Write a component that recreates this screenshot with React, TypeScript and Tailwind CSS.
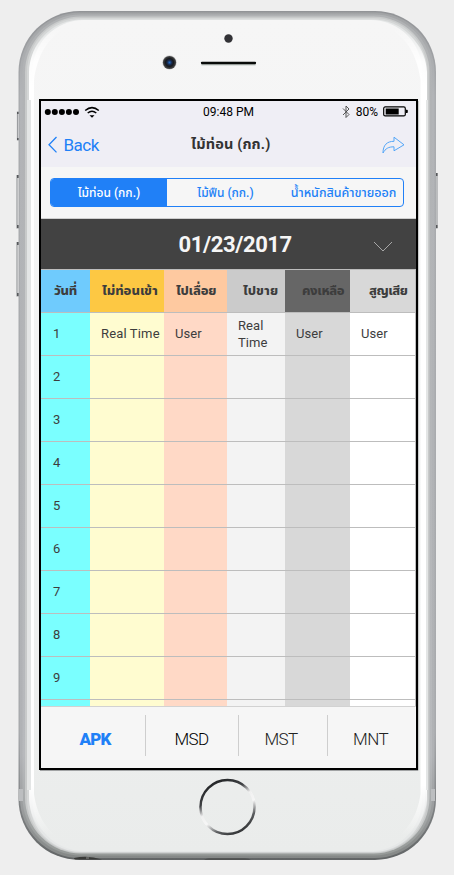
import React from "react";

const columns = [
  { title: "วันที่", text: "", width: "w-[49px]", head: "bg-[#6fcbfd]", body: "bg-[#7affff]", pad: "pl-[13px]", track: "tracking-[-0.2px]" },
  { title: "ไม่ท่อนเข้า", text: "Real Time", width: "w-[74px]", head: "bg-[#fdc843]", body: "bg-[#fffcd0]", pad: "pl-[12px]", track: "tracking-normal" },
  { title: "ไปเลื่อย", text: "User", width: "w-[63px]", head: "bg-[#fec9a0]", body: "bg-[#ffd9c6]", pad: "pl-[12px]", track: "tracking-[-0.15px]" },
  { title: "ไปขาย", text: "Real Time", width: "w-[58px]", head: "bg-[#cbcbcb]", body: "bg-[#f3f3f3]", pad: "pl-[16px]", track: "tracking-[0.1px]" },
  { title: "คงเหลือ", text: "User", width: "w-[65px]", head: "bg-[#666666]", body: "bg-[#d8d8d8]", pad: "pl-[17px]", track: "tracking-[-0.4px]" },
  { title: "สูญเสีย", text: "User", width: "w-[65px]", head: "bg-[#d8d8d8]", body: "bg-white", pad: "pl-[19px]", track: "tracking-[-0.5px]" },
];

const bodyPads = ["pl-[12px]", "pl-[11px]", "pl-[11px]", "pl-[11px]", "pl-[11px]", "pl-[11px]"];

function PhoneCase() {
  return (
    <svg className="absolute inset-0" width="454" height="875" viewBox="0 0 454 875" fill="none">
      <defs>
        <linearGradient id="edge" x1="0" y1="11" x2="0" y2="860" gradientUnits="userSpaceOnUse">
          <stop offset="0" stopColor="#929497" />
          <stop offset="0.1" stopColor="#aaacaf" />
          <stop offset="0.85" stopColor="#a8aaad" />
          <stop offset="1" stopColor="#626566" />
        </linearGradient>
        <linearGradient id="metal" x1="0" y1="12" x2="0" y2="858" gradientUnits="userSpaceOnUse">
          <stop offset="0" stopColor="#a2a4a6" />
          <stop offset="0.1" stopColor="#b2b4b7" />
          <stop offset="0.88" stopColor="#b0b2b5" />
          <stop offset="1" stopColor="#858887" />
        </linearGradient>
        <linearGradient id="inner" x1="0" y1="14" x2="0" y2="856" gradientUnits="userSpaceOnUse">
          <stop offset="0" stopColor="#b0b2b4" />
          <stop offset="0.88" stopColor="#b7b9bc" />
          <stop offset="1" stopColor="#969a98" />
        </linearGradient>
        <linearGradient id="face" x1="0" y1="20" x2="0" y2="852" gradientUnits="userSpaceOnUse">
          <stop offset="0" stopColor="#f6f6f6" />
          <stop offset="0.4" stopColor="#f3f4f4" />
          <stop offset="1" stopColor="#eaeceb" />
        </linearGradient>
        <linearGradient id="shine" x1="0" y1="20" x2="0" y2="852" gradientUnits="userSpaceOnUse">
          <stop offset="0.01" stopColor="#fff" stopOpacity="0" />
          <stop offset="0.05" stopColor="#fff" stopOpacity="0.9" />
          <stop offset="0.08" stopColor="#fff" />
          <stop offset="0.92" stopColor="#fff" />
          <stop offset="0.98" stopColor="#fff" stopOpacity="0" />
        </linearGradient>
        <linearGradient id="ring" x1="215" y1="782" x2="242" y2="834" gradientUnits="userSpaceOnUse">
          <stop offset="0" stopColor="#252729" />
          <stop offset="0.25" stopColor="#3f4144" />
          <stop offset="0.42" stopColor="#f0f0f0" />
          <stop offset="0.58" stopColor="#f6f6f6" />
          <stop offset="0.78" stopColor="#5c5e60" />
          <stop offset="1" stopColor="#292b2d" />
        </linearGradient>
        <radialGradient id="lens">
          <stop offset="0" stopColor="#246cc6" />
          <stop offset="0.35" stopColor="#18294a" />
          <stop offset="0.6" stopColor="#17191b" />
          <stop offset="1" stopColor="#4b4c4e" />
        </radialGradient>
      </defs>
      <path d="M19 112h-1.500v28H19M19 175.500h-2V228H19M19 242.500h-2V296H19M435 173.500h2V228H435" stroke="#9b9da0" strokeWidth="1.200" />
      <path d="M17 112h2v2h-2zM17 138h2v2h-2zM17 175h2.500v3H17zM17 225h2.500v3H17zM17 242h2.500v3H17zM17 293h2.500v3H17zM435.500 173h2v3h-2zM435.500 225h2v3h-2z" fill="#56585b" />
      <rect x="18.500" y="11" width="417.500" height="849" rx="61" fill="url(#edge)" />
      <rect x="20" y="12.500" width="414.500" height="845.500" rx="60" fill="url(#metal)" />
      <rect x="22.500" y="14.500" width="409.500" height="841" rx="58" fill="url(#inner)" />
      <rect x="25" y="16.500" width="404.500" height="837" rx="56" fill="#c8caca" />
      <rect x="27" y="18" width="400.500" height="834.500" rx="54" fill="#d5d7d7" />
      <rect x="29.500" y="19.500" width="395.500" height="832.500" rx="52" fill="#e5e7e7" />
      <rect x="32.500" y="20" width="389.500" height="831" rx="51" fill="url(#face)" />
      <path d="M72 25C44 28 30 48 29 72V800C31 824 46 840 68 844C47 833 37 816 34 794V80C38 50 52 33 72 25Z" fill="url(#shine)" />
      <path d="M382.500 25C410.500 28 426 48 427 72V800C425 824 408.500 840 386.500 844C407.500 833 417.500 816 420.500 794V80C416.500 50 402.500 33 382.500 25Z" fill="url(#shine)" />
      <path d="M29 100V790" stroke="#e3e5e5" strokeWidth="4" />
      <path d="M427 100V790" stroke="#e3e5e5" strokeWidth="2" />
      <path d="M19 789h4v12h-4M431 789h4v12h-4" fill="#bcbec0" />
      <path d="M74 858Q88 855 102 859.500H77Q74 859.500 74 858Z" fill="#393a38" />
      <path d="M86 858h3" stroke="#8a8a88" />
      <path d="M204 860q2-1.800 5-1.800h36q4 0 6 1.800z" fill="#505252" />
      <circle cx="228.500" cy="38.500" r="4.200" fill="#323236" />
      <circle cx="169.500" cy="62.500" r="7.200" fill="#d1d1d1" />
      <circle cx="169.500" cy="62.500" r="6.600" fill="url(#lens)" />
      <path d="M202 64.500H255" stroke="#c4ccc8" strokeWidth="2" strokeLinecap="round" />
      <path d="M202 63H255" stroke="#080a09" strokeWidth="2.300" strokeLinecap="round" />
      <circle cx="227.500" cy="807" r="28" stroke="#f8f8f8" strokeWidth="1" />
      <circle cx="227.500" cy="807" r="27" stroke="url(#ring)" strokeWidth="2.500" />
      <path d="M40 770.500H418V101" stroke="#a1a3a4" />
    </svg>
  );
}

function StatusBar() {
  return (
    <div className="grid h-[21px] grid-cols-3 items-center text-[12px] text-black">
      <svg width="60" height="20" viewBox="0 0 60 20" fill="none">
        <g fill="#000">
          <circle cx="6.800" cy="10" r="3" />
          <circle cx="13.800" cy="10" r="3" />
          <circle cx="20.900" cy="10" r="3" />
          <circle cx="27.900" cy="10" r="3" />
          <circle cx="35" cy="10" r="3" />
          <path d="M48.500 13.200h5L51 15.800z" />
        </g>
        <path d="M44.200 8.500Q51 2.700 57.800 8.500" stroke="#000" strokeWidth="1.500" />
        <path d="M46.700 11Q51 7.500 55.300 11" stroke="#000" strokeWidth="1.500" />
      </svg>
      <span className="text-center">09:48 PM</span>
      <div className="flex items-center justify-end pr-[8px]">
        <svg width="9" height="14" viewBox="0 0 9 14" fill="none" stroke="#444" strokeWidth=".9">
          <path d="M1 3.500l6 6-3 3V1l3 3-6 6" />
        </svg>
        <span className="ml-[5px] mr-[5px] mt-px">80%</span>
        <svg width="25" height="11" viewBox="0 0 25 11" fill="none">
          <rect x=".7" y=".9" width="21.600" height="9" rx="1.500" stroke="#000" strokeWidth="1.200" />
          <path d="M2.700 2.500h13v6h-13zM23 3.700h1q.8 0 .8.800v1.700q0 .8-.8.800h-1z" fill="#000" />
        </svg>
      </div>
    </div>
  );
}

function Navigation() {
  return (
    <div className="flex h-[45px] items-center text-[#2080f7]">
      <svg className="ml-[7px]" width="9" height="18" viewBox="0 0 9 18" fill="none">
        <path d="M8.500 1L1 8.700l7.500 7.700" stroke="currentColor" strokeWidth="1.300" />
      </svg>
      <span className="ml-[6.500px] w-[70px] pt-[2px] text-[17px] leading-none tracking-[-0.5px]">Back</span>
      <span className="ml-[57.500px] w-[160px] whitespace-nowrap text-[14.500px] font-bold tracking-[0.15px] text-[#333]">ไม้ท่อน (กก.)</span>
      <svg className="ml-auto mr-[11px]" width="23" height="18" viewBox="0 0 23 18" fill="none">
        <path d="M1 17C1 9 5 5.300 12 5.300V1.200L22 8.800l-10 6v-4C6.500 10.800 3.500 12.500 1 17Z" stroke="#53a6f8" />
      </svg>
    </div>
  );
}

function Segments() {
  return (
    <div className="ml-[9px] mr-[12px] mt-[11px] flex h-[29px] shrink-0 overflow-hidden rounded-[4px] border border-[#2080f7] text-[12px] font-medium text-[#2080f7]">
      <span className="flex w-[116px] items-center justify-center bg-[#2080f7] text-white">ไม้ท่อน (กก.)</span>
      <span className="flex w-[117px] items-center justify-center">ไม้ฟืน (กก.)</span>
      <span className="flex flex-1 items-center justify-center whitespace-nowrap pt-px text-[12.500px]">น้ำหนักสินค้าขายออก</span>
    </div>
  );
}

function StockTable() {
  return (
    <div className="h-[438px] shrink-0 overflow-hidden border-b border-[#d2d2d2]">
      <div className="w-[375px] border-r border-t border-[#bdbdbd] text-[13px] leading-[17px] text-[#3d3d3d]">
        <div className="flex h-[43px]">
          {columns.map((column) => (
            <div key={column.title} className={`flex shrink-0 items-center whitespace-nowrap border-b border-[#bdbdbd] pb-px font-extrabold ${column.width} ${column.head} ${column.pad} ${column.track}`}>
              {column.title}
            </div>
          ))}
        </div>
        {Array.from({ length: 10 }, (_, row) => (
          <div key={row} className="flex h-[43px]">
            {columns.map((column, index) => (
              <div key={column.title} className={`flex shrink-0 items-center border-b border-[#bdbdbd] pb-px ${column.width} ${column.body} ${bodyPads[index]}`}>
                <span className={index === 1 ? "whitespace-nowrap tracking-[0.15px]" : "tracking-[0.05px]"}>
                  {index === 0 ? (row < 9 ? row + 1 : "") : row === 0 ? column.text : ""}
                </span>
              </div>
            ))}
          </div>
        ))}
      </div>
    </div>
  );
}

export default function App() {
  return (
    <main className="relative h-[875px] w-[454px] overflow-hidden bg-[#eeeeee] pl-[39px] pt-[99px] font-['Roboto','Noto_Sans_Thai',sans-serif]">
      <PhoneCase />
      <section className="relative flex h-[671px] w-[379px] flex-col overflow-hidden border-2 border-black bg-[#f6f6f6]">
        <header className="h-[66px] shrink-0 bg-[#efeef5]">
          <StatusBar />
          <Navigation />
        </header>
        <Segments />
        <div className="mt-[11px] flex h-[51px] shrink-0 items-center border-t border-[#cecece] bg-[#424242] text-[22px] font-bold text-[#f6f6f6]">
          <span className="ml-[137.500px] tracking-[-0.4px]">01/23/2017</span>
          <svg className="ml-auto mr-[23px] mt-[5px]" width="20" height="12" viewBox="0 0 20 12" fill="none">
            <path d="M1 1l9 9 9-9" stroke="#a7a7a7" />
          </svg>
        </div>
        <StockTable />
        <footer className="flex h-[61px] shrink-0 items-start pt-[8px] text-[17px] font-light tracking-[-0.6px] text-black">
          <span className="flex h-[41px] w-[105px] items-center justify-center border-r border-[#cecece] pl-[4px] pt-[9px] font-black tracking-[-0.9px] text-[#2080f7]">APK</span>
          <span className="flex h-[41px] w-[93px] items-center justify-center border-r border-[#cecece] pr-px pt-[9px]">MSD</span>
          <span className="flex h-[41px] w-[89px] items-center justify-center border-r border-[#cecece] pr-[4px] pt-[9px] text-[#222]">MST</span>
          <span className="flex h-[41px] flex-1 items-center justify-center pr-[3px] pt-[9px] text-[#222]">MNT</span>
        </footer>
      </section>
    </main>
  );
}
